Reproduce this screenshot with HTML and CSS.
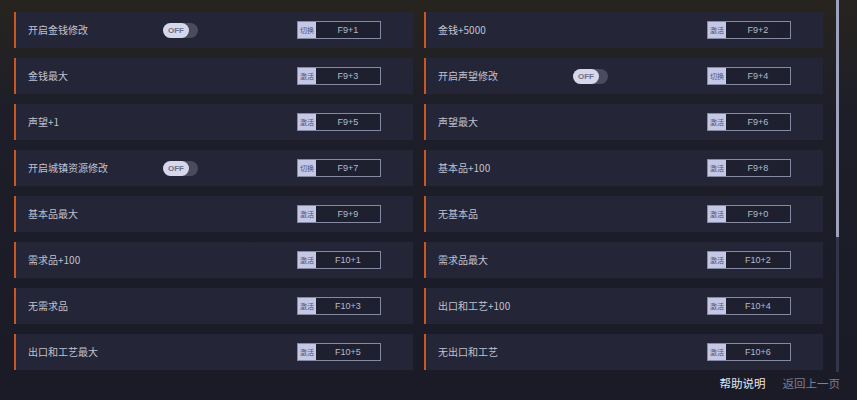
FILE: index.html
```html
<!DOCTYPE html>
<html lang="zh">
<head>
<meta charset="utf-8">
<link rel="stylesheet" href="styles.css">
</head>
<body>
<div class="page">
  <div class="grid">
    <div class="row"><span class="label">开启金钱修改</span><span class="toggle"><span class="knob">OFF</span></span><span class="key"><span class="tag">切换</span><span class="combo">F9+1</span></span></div>
    <div class="row"><span class="label">金钱+5000</span><span class="key"><span class="tag">激活</span><span class="combo">F9+2</span></span></div>
    <div class="row"><span class="label">金钱最大</span><span class="key"><span class="tag">激活</span><span class="combo">F9+3</span></span></div>
    <div class="row"><span class="label">开启声望修改</span><span class="toggle"><span class="knob">OFF</span></span><span class="key"><span class="tag">切换</span><span class="combo">F9+4</span></span></div>
    <div class="row"><span class="label">声望+1</span><span class="key"><span class="tag">激活</span><span class="combo">F9+5</span></span></div>
    <div class="row"><span class="label">声望最大</span><span class="key"><span class="tag">激活</span><span class="combo">F9+6</span></span></div>
    <div class="row"><span class="label">开启城镇资源修改</span><span class="toggle"><span class="knob">OFF</span></span><span class="key"><span class="tag">切换</span><span class="combo">F9+7</span></span></div>
    <div class="row"><span class="label">基本品+100</span><span class="key"><span class="tag">激活</span><span class="combo">F9+8</span></span></div>
    <div class="row"><span class="label">基本品最大</span><span class="key"><span class="tag">激活</span><span class="combo">F9+9</span></span></div>
    <div class="row"><span class="label">无基本品</span><span class="key"><span class="tag">激活</span><span class="combo">F9+0</span></span></div>
    <div class="row"><span class="label">需求品+100</span><span class="key"><span class="tag">激活</span><span class="combo">F10+1</span></span></div>
    <div class="row"><span class="label">需求品最大</span><span class="key"><span class="tag">激活</span><span class="combo">F10+2</span></span></div>
    <div class="row"><span class="label">无需求品</span><span class="key"><span class="tag">激活</span><span class="combo">F10+3</span></span></div>
    <div class="row"><span class="label">出口和工艺+100</span><span class="key"><span class="tag">激活</span><span class="combo">F10+4</span></span></div>
    <div class="row"><span class="label">出口和工艺最大</span><span class="key"><span class="tag">激活</span><span class="combo">F10+5</span></span></div>
    <div class="row"><span class="label">无出口和工艺</span><span class="key"><span class="tag">激活</span><span class="combo">F10+6</span></span></div>
  </div>
  <div class="footer">
    <span class="link primary">帮助说明</span>
    <span class="link">返回上一页</span>
  </div>
  <div class="scrollbar"><div class="thumb"></div></div>
</div>
</body>
</html>
```

FILE: styles.css
```css
html, body {
  margin: 0;
  padding: 0;
}
body {
  width: 857px;
  height: 400px;
  overflow: hidden;
  background: linear-gradient(180deg, #27241f 0px, #242222 40px, #1d1e28 110px, #1a1b27 400px);
  font-family: "Noto Sans CJK SC", "Noto Sans", sans-serif;
  color: #c9cad6;
}
.page {
  position: relative;
  height: 400px;
  padding: 12px 0 0 14px;
  box-sizing: border-box;
}
.grid {
  display: grid;
  grid-template-columns: 399px 399px;
  column-gap: 11px;
  row-gap: 10px;
}
.row {
  height: 36px;
  display: flex;
  align-items: center;
  background: #242637;
  border-left: 2px solid #c9571f;
  box-sizing: border-box;
  padding-left: 12px;
}
.label {
  width: 135px;
  font-size: 10px;
  line-height: 14px;
  color: #c0c1cf;
  white-space: nowrap;
}
.toggle {
  width: 35px;
  height: 15px;
  border-radius: 8px;
  background: #4a4c5d;
  display: flex;
  align-items: center;
}
.knob {
  width: 26px;
  height: 15px;
  border-radius: 8px;
  background: #d6d7ea;
  color: #6e7086;
  font-family: "Liberation Sans", "Noto Sans", sans-serif;
  font-size: 8px;
  font-weight: bold;
  display: flex;
  align-items: center;
  justify-content: center;
}
.key {
  margin-left: auto;
  margin-right: 32px;
  width: 84px;
  height: 18px;
  border: 1px solid #858aa2;
  box-sizing: border-box;
  display: flex;
  background: #1e2030;
}
.tag {
  width: 18px;
  background: #c4c7e6;
  color: #4e5170;
  font-size: 7px;
  line-height: 16px;
  text-align: center;
  white-space: nowrap;
  overflow: hidden;
}
.combo {
  flex: 1;
  text-align: center;
  font-family: "Liberation Sans", "Noto Sans", sans-serif;
  font-size: 9px;
  line-height: 16px;
  color: #b8b9c6;
}
.footer {
  display: flex;
  justify-content: flex-end;
  gap: 17px;
  padding: 5px 17px 0 0;
  font-size: 11.5px;
  line-height: 16px;
}
.link {
  color: #7c7f92;
}
.link.primary {
  color: #e6e7ef;
}
.scrollbar {
  position: absolute;
  left: 836px;
  top: 0;
  width: 3px;
  height: 372px;
  background: #33364a;
}
.thumb {
  height: 237px;
  background: #9ea2bd;
}
```
